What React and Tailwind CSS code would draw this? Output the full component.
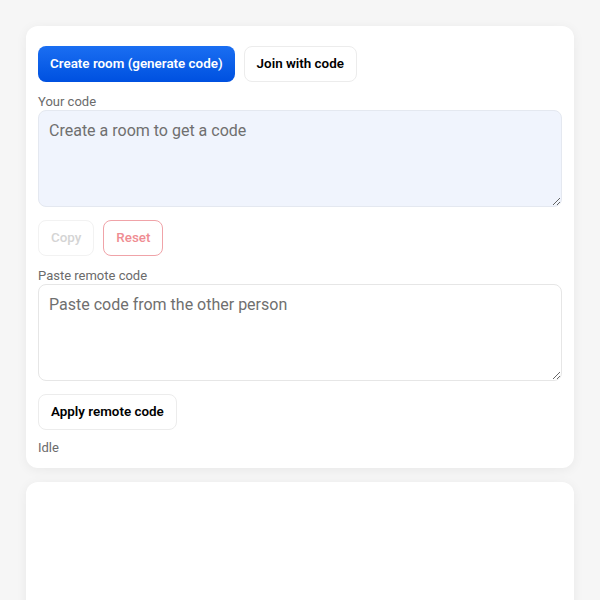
import React, { useState } from 'react';

const App = () => {
  const [remote, setRemote] = useState('');
  const [status] = useState('Idle');

  return (
    <div className="min-h-screen bg-[#f6f6f6] px-[26px] pt-[26px] pb-6 font-['Roboto',sans-serif]">
      <div className="max-w-[548px] mx-auto space-y-[14px]">
        <div className="bg-white rounded-xl shadow-[0_2px_12px_rgba(0,0,0,0.06)] pt-5 px-3 pb-3">
          <div className="flex gap-[9px]">
            <button className="h-9 px-3 rounded-lg bg-gradient-to-b from-[#1a6ef2] to-[#0050e0] text-white text-[13.4px] font-semibold">
              Create room (generate code)
            </button>
            <button className="h-9 px-3 rounded-lg bg-white border border-[#ececec] text-black text-[13.4px] font-semibold">
              Join with code
            </button>
          </div>

          <label className="block mt-3 text-[13px] leading-4 text-[#6b6b6b]">Your code</label>
          <textarea
            readOnly
            placeholder="Create a room to get a code"
            className="block w-full h-[97px] rounded-lg border border-[#e4e8f0] bg-[#f0f4fd] px-[10px] py-[8px] text-[16px] text-[#333] placeholder:text-[#6f6f6f] outline-none"
          />

          <div className="flex gap-[9px] mt-[13px]">
            <button disabled className="h-9 px-3 rounded-lg bg-white border border-[#f2f2f2] text-[#d4d4d4] text-[13.4px] font-medium">
              Copy
            </button>
            <button className="h-9 px-3 rounded-lg bg-white border border-[#f0a3a8] text-[#ef8d93] text-[13.4px] font-medium">
              Reset
            </button>
          </div>

          <label className="block mt-3 text-[13px] leading-4 text-[#6b6b6b]">Paste remote code</label>
          <textarea
            value={remote}
            onChange={e => setRemote(e.target.value)}
            placeholder="Paste code from the other person"
            className="block w-full h-[97px] rounded-lg border border-[#e6e6e6] bg-white px-[10px] py-[8px] text-[16px] text-[#333] placeholder:text-[#6f6f6f] outline-none"
          />

          <button className="mt-[13px] h-9 px-3 rounded-lg bg-white border border-[#ececec] text-black text-[13.4px] font-semibold">
            Apply remote code
          </button>

          <p className="mt-[10px] text-[13px] leading-4 text-[#6b6b6b]">{status}</p>
        </div>

        <div className="bg-white rounded-xl shadow-[0_2px_12px_rgba(0,0,0,0.06)] h-[200px]" />
      </div>
    </div>
  );
};

export default App;
